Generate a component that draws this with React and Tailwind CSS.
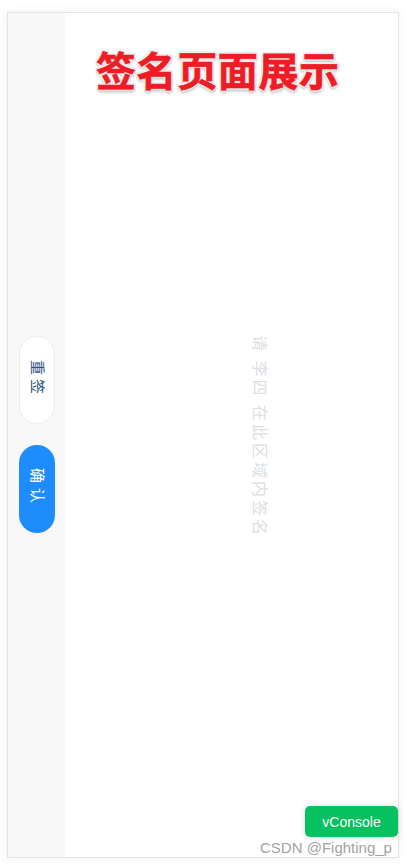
import React from 'react';

const cjk = "font-['Liberation_Sans','Noto_Sans_CJK_SC',sans-serif]";

function SideButton({ primary, children }) {
    return (
        <button
            className={
                primary
                    ? 'w-9 h-[88px] rounded-[18px] bg-[#1e8cfc] text-white text-[15px] leading-none flex items-center justify-center [writing-mode:vertical-rl] [text-orientation:sideways] tracking-[5px]'
                    : 'w-9 h-[88px] rounded-[18px] bg-white border border-[#ededed] text-[#24527f] text-[15px] leading-none flex items-center justify-center [writing-mode:vertical-rl] [text-orientation:sideways] tracking-[4px]'
            }
        >
            {children}
        </button>
    );
}

export default function App() {
    return (
        <div className={`relative w-[407px] h-[866px] bg-white pt-3 pb-2 pl-[7px] pr-[8px] overflow-hidden ${cjk}`}>
            <div className="flex h-full border border-[#e4e4e4] shadow-[0_0_10px_rgba(0,0,0,0.06)]">
                <div className="w-[57px] shrink-0 bg-[#f8f8f8] flex flex-col items-start justify-center gap-[21px] pl-[11px] pb-[2px]">
                    <SideButton>重签</SideButton>
                    <SideButton primary>确认</SideButton>
                </div>
                <div className="flex-1 bg-white flex flex-col">
                    <h1 className="pt-[32px] pl-[31px] text-[40px] leading-[54px] font-bold text-[#ee1c25] tracking-[0.6px] whitespace-nowrap [-webkit-text-stroke:0.7px_#ee1c25] [text-shadow:2px_0_0_#eee,-2px_0_0_#eee,0_2px_0_#e4e4e4,0_-2px_0_#eee,2px_2px_0_#ddd,-2px_2px_0_#ddd,2px_-2px_0_#eee,-2px_-2px_0_#eee,0_3px_3px_#bbb]">
                        签名页面展示
                    </h1>
                    <div className="flex-1 flex justify-center pl-[54px] pt-[236px]">
                        <span className="h-fit [writing-mode:vertical-rl] [text-orientation:sideways] text-[#dcdfe3] text-base leading-[18px] tracking-[3px] [word-spacing:-1px] whitespace-pre">
                            请 李四 在此区域内签名
                        </span>
                    </div>
                </div>
            </div>
            <div className="absolute left-[305px] top-[806px] w-[93px] h-[31px] rounded-[5px] bg-[#07c160] text-white text-sm flex items-center justify-center shadow-[0_0_6px_rgba(0,0,0,0.15)]">
                vConsole
            </div>
            <div className="absolute left-[260px] top-[838px] text-[#a3a3a3] text-[15px] leading-5 whitespace-nowrap">
                CSDN @Fighting_p
            </div>
        </div>
    );
}
